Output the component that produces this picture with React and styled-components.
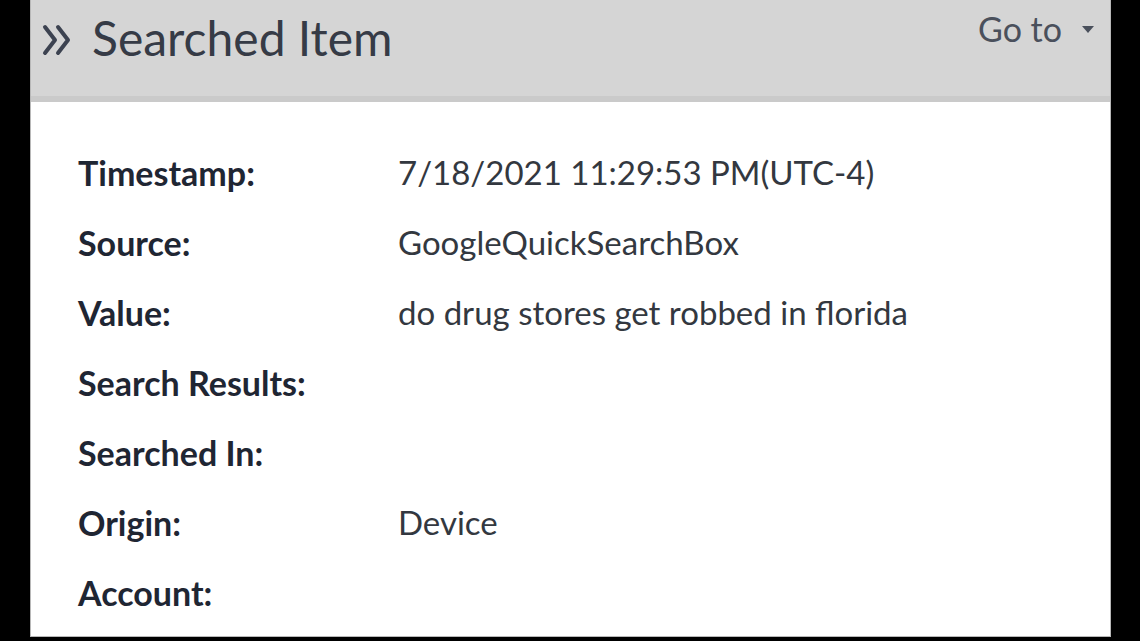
import React from 'react';
import styled, { createGlobalStyle } from 'styled-components';

const rows = [
	{ label: 'Timestamp:', value: '7/18/2021 11:29:53 PM(UTC-4)' },
	{ label: 'Source:', value: 'GoogleQuickSearchBox' },
	{ label: 'Value:', value: 'do drug stores get robbed in florida' },
	{ label: 'Search Results:', value: '' },
	{ label: 'Searched In:', value: '' },
	{ label: 'Origin:', value: 'Device' },
	{ label: 'Account:', value: '' },
];

const App = () => {
	return (
		<Page>
			<GlobalStyle />
			<Panel>
				<Header>
					<Title>
						<Chevrons viewBox="0 0 30 34" aria-hidden="true">
							<polyline points="3,4 13,17 3,30" />
							<polyline points="16,4 26,17 16,30" />
						</Chevrons>
						Searched Item
					</Title>
					<GoTo>
						Go to
						<Caret />
					</GoTo>
				</Header>
				<Body>
					{rows.map((row) => (
						<Row key={row.label}>
							<Label>{row.label}</Label>
							<Value>{row.value}</Value>
						</Row>
					))}
				</Body>
			</Panel>
		</Page>
	);
};

export default App;

const GlobalStyle = createGlobalStyle`
	html, body {
		margin: 0;
		padding: 0;
		background: #000;
	}
`;

const Page = styled.div`
	width: 1140px;
	height: 641px;
	background: #000;
	padding: 0 29px 4px 30px;
	box-sizing: border-box;
	font-family: Lato, 'Open Sans', sans-serif;
	overflow: hidden;
`;

const Panel = styled.div`
	height: 100%;
	background: #fff;
	border: 1px solid #b8b8b8;
	border-top: none;
	box-sizing: border-box;
	display: flex;
	flex-direction: column;
`;

const Header = styled.div`
	height: 102px;
	flex-shrink: 0;
	background: #d5d5d5;
	border-bottom: 6px solid #cacaca;
	box-sizing: border-box;
	display: flex;
	align-items: flex-start;
	justify-content: space-between;
	padding: 6px 16px 0 11px;
`;

const Title = styled.div`
	display: flex;
	align-items: center;
	gap: 20px;
	font-size: 48px;
	color: #363b46;
	line-height: 64px;
`;

const Chevrons = styled.svg`
	width: 30px;
	height: 34px;
	margin-top: 4px;
	fill: none;
	stroke: #3c4250;
	stroke-width: 4;
	stroke-linecap: round;
	stroke-linejoin: round;
`;

const GoTo = styled.div`
	display: flex;
	align-items: center;
	font-size: 34px;
	color: #4a505c;
	line-height: 50px;
	margin-top: -2px;
`;

const Caret = styled.span`
	width: 0;
	height: 0;
	border-left: 6px solid transparent;
	border-right: 6px solid transparent;
	border-top: 7px solid #4a505c;
	margin-left: 20px;
`;

const Body = styled.div`
	display: flex;
	flex-direction: column;
	padding: 35px 0 0 47px;
`;

const Row = styled.div`
	display: grid;
	grid-template-columns: 320px 1fr;
	height: 70px;
	align-items: center;
`;

const Label = styled.div`
	font-size: 34px;
	font-weight: 700;
	color: #1f2633;
`;

const Value = styled.div`
	font-size: 33px;
	color: #333840;
`;
